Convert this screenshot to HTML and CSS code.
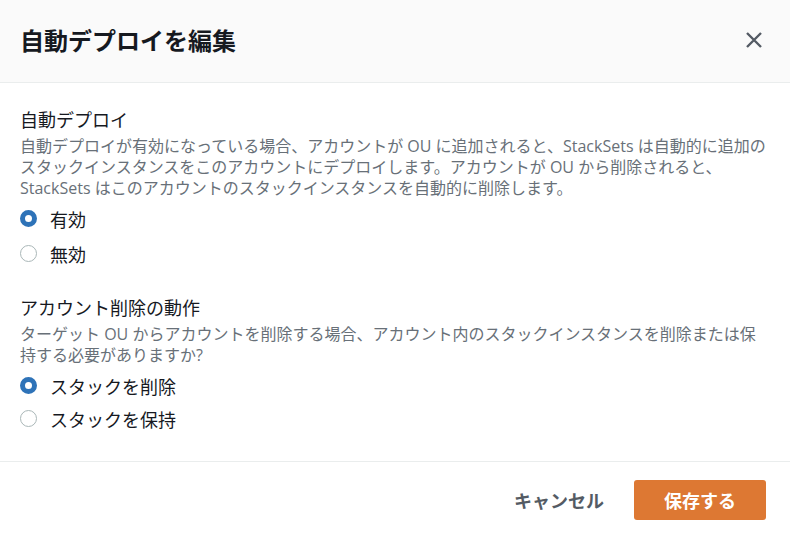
FILE: index.html
```html
<!DOCTYPE html>
<html lang="ja">
<head>
<meta charset="utf-8">
<link rel="stylesheet" href="styles.css">
</head>
<body>
<div class="modal">
  <header class="modal-header">
    <h1 class="title">自動デプロイを編集</h1>
    <button class="close" aria-label="閉じる">
      <svg width="18" height="18" viewBox="0 0 18 18"><path d="M2 2 L16 16 M16 2 L2 16" stroke="#545b64" stroke-width="2.4" stroke-linecap="butt" fill="none"/></svg>
    </button>
  </header>
  <main class="modal-body">
    <section class="field">
      <div class="label">自動デプロイ</div>
      <p class="desc">自動デプロイが有効になっている場合、アカウントが OU に追加されると、StackSets は自動的に追加のスタックインスタンスをこのアカウントにデプロイします。アカウントが OU から削除されると、StackSets はこのアカウントのスタックインスタンスを自動的に削除します。</p>
      <div class="radios">
        <label class="radio"><span class="dot checked"></span><span class="rtext">有効</span></label>
        <label class="radio"><span class="dot"></span><span class="rtext">無効</span></label>
      </div>
    </section>
    <section class="field second">
      <div class="label">アカウント削除の動作</div>
      <p class="desc">ターゲット OU からアカウントを削除する場合、アカウント内のスタックインスタンスを削除または保持する必要がありますか?</p>
      <div class="radios tight">
        <label class="radio"><span class="dot checked"></span><span class="rtext">スタックを削除</span></label>
        <label class="radio"><span class="dot"></span><span class="rtext">スタックを保持</span></label>
      </div>
    </section>
  </main>
  <footer class="modal-footer">
    <button class="btn-link">キャンセル</button>
    <button class="btn-primary">保存する</button>
  </footer>
</div>
</body>
</html>
```
FILE: styles.css
```css
* { box-sizing: border-box; }
html, body { margin: 0; padding: 0; background: #ffffff; }
body {
  font-family: "Open Sans", "Noto Sans CJK JP", sans-serif;
  color: #16191f;
  width: 790px;
  height: 534px;
  overflow: hidden;
}
.modal { width: 790px; }
.modal-header {
  height: 83px;
  background: #fafafa;
  border-bottom: 1px solid #eaeded;
  display: flex;
  align-items: center;
  justify-content: space-between;
  padding: 0 27px 2px 20px;
}
.title {
  margin: 0;
  font-size: 24px;
  font-weight: 700;
  line-height: 30px;
  color: #16191f;
  font-family: "Noto Sans CJK JP", sans-serif;
}
.close {
  background: none;
  border: 0;
  padding: 0;
  width: 18px;
  height: 18px;
  display: flex;
}
.modal-body {
  padding: 24px 20px 26px 20px;
  border-bottom: 1px solid #eaeded;
}
.field.second { margin-top: 24px; }
.label {
  font-size: 18px;
  line-height: 24px;
  font-family: "Noto Sans CJK JP", sans-serif;
}
.desc {
  margin: 5px 0 0 0;
  font-size: 16px;
  line-height: 21px;
  color: #687078;
}
.radios { margin-top: 2px; display: flex; flex-direction: column; }
.radios.tight { margin-top: 3px; }
.radio {
  display: flex;
  align-items: center;
  height: 35px;
}
.radios.tight .radio { height: 33px; }
.dot {
  width: 17px;
  height: 17px;
  border-radius: 50%;
  border: 1.5px solid #aab7b8;
  background: #fff;
  flex: none;
}
.dot.checked {
  border: 5px solid #2e73b8;
}
.rtext {
  margin-left: 13px;
  font-size: 18px;
  line-height: 24px;
  font-family: "Noto Sans CJK JP", sans-serif;
  color: #16191f;
}
.modal-footer {
  display: flex;
  justify-content: flex-end;
  align-items: center;
  padding: 18px 24px 13px 20px;
  gap: 30px;
}
.btn-link {
  background: none;
  border: 0;
  padding: 0;
  font-family: "Noto Sans CJK JP", sans-serif;
  font-size: 18px;
  font-weight: 700;
  color: #545b64;
  height: 40px;
}
.btn-primary {
  background: #dd7833;
  border: 0;
  border-radius: 3px;
  color: #ffffff;
  font-family: "Noto Sans CJK JP", sans-serif;
  font-size: 18px;
  font-weight: 700;
  width: 132px;
  height: 40px;
  padding: 0;
}
```
